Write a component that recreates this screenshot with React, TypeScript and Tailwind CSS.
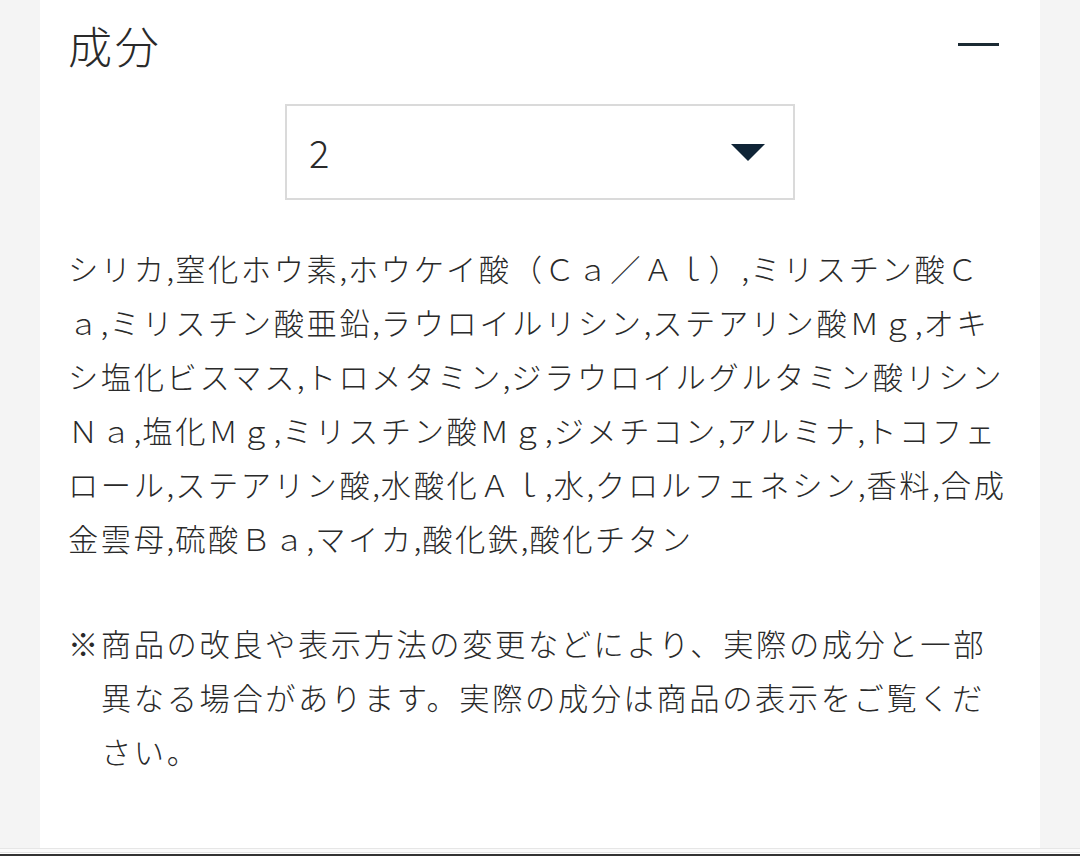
import React from 'react';

const INGREDIENT_LINES = [
  'シリカ,窒化ホウ素,ホウケイ酸（Ｃａ／Ａｌ）,ミリスチン酸Ｃ',
  'ａ,ミリスチン酸亜鉛,ラウロイルリシン,ステアリン酸Ｍｇ,オキ',
  'シ塩化ビスマス,トロメタミン,ジラウロイルグルタミン酸リシン',
  'Ｎａ,塩化Ｍｇ,ミリスチン酸Ｍｇ,ジメチコン,アルミナ,トコフェ',
  'ロール,ステアリン酸,水酸化Ａｌ,水,クロルフェネシン,香料,合成',
  '金雲母,硫酸Ｂａ,マイカ,酸化鉄,酸化チタン',
];

const NOTE_LINES = [
  '※商品の改良や表示方法の変更などにより、実際の成分と一部',
  '異なる場合があります。実際の成分は商品の表示をご覧くだ',
  'さい。',
];

const font = 'font-["Noto_Sans_CJK_JP","Noto_Sans",sans-serif]';

// half-width commas sit tight, with less letter spacing than the full-width glyphs
const Line = ({ text }: { text: string }) => (
  <span className="block whitespace-nowrap">
    {text.split(',').map((part, i) => (
      <React.Fragment key={i}>
        {i > 0 && <span className="tracking-[1px]">,</span>}
        {part}
      </React.Fragment>
    ))}
  </span>
);

export default function App() {
  return (
    <div className={`flex h-[856px] w-[1080px] flex-col overflow-hidden bg-[#f4f4f4] text-[#2a2a2a] ${font}`}>
      <div className="mx-[40px] flex-1 bg-white px-[28px]">
        <div className="flex h-[90px] items-center justify-between">
          <h2 className="text-[44px] font-light leading-none tracking-[2.75px]">成分</h2>
          <div className="mb-[2px] mr-[13px] h-[3px] w-[41px] bg-[#1b2a33]" />
        </div>

        <div className="mx-auto mt-[14px] flex h-[96px] w-[510px] items-center justify-between border-2 border-[#dadada] pl-[22px] pr-[28px]">
          <span className="text-[38px] font-light leading-none">2</span>
          <svg width="34" height="17" viewBox="0 0 34 17">
            <polygon points="0,0 34,0 17,17" fill="#0f2436" />
          </svg>
        </div>

        <p className="mt-[41px] text-[30.25px] font-light leading-[54px] tracking-[2.6px]">
          {INGREDIENT_LINES.map((line) => (
            <Line key={line} text={line} />
          ))}
        </p>

        <p className="mt-[51px] text-[30.25px] font-light leading-[54px] tracking-[2.6px]">
          {NOTE_LINES.map((line, i) => (
            <span key={line} className={`block whitespace-nowrap ${i > 0 ? 'pl-[33px]' : ''}`}>
              {line}
            </span>
          ))}
        </p>
      </div>
      <div className="h-px bg-[#e6e6e6]" />
      <div className="h-[3px] bg-[#fafafa]" />
      <div className="h-px bg-[#e4e4e4]" />
      <div className="h-px bg-white" />
      <div className="h-[2px] bg-[#333333]" />
    </div>
  );
}
